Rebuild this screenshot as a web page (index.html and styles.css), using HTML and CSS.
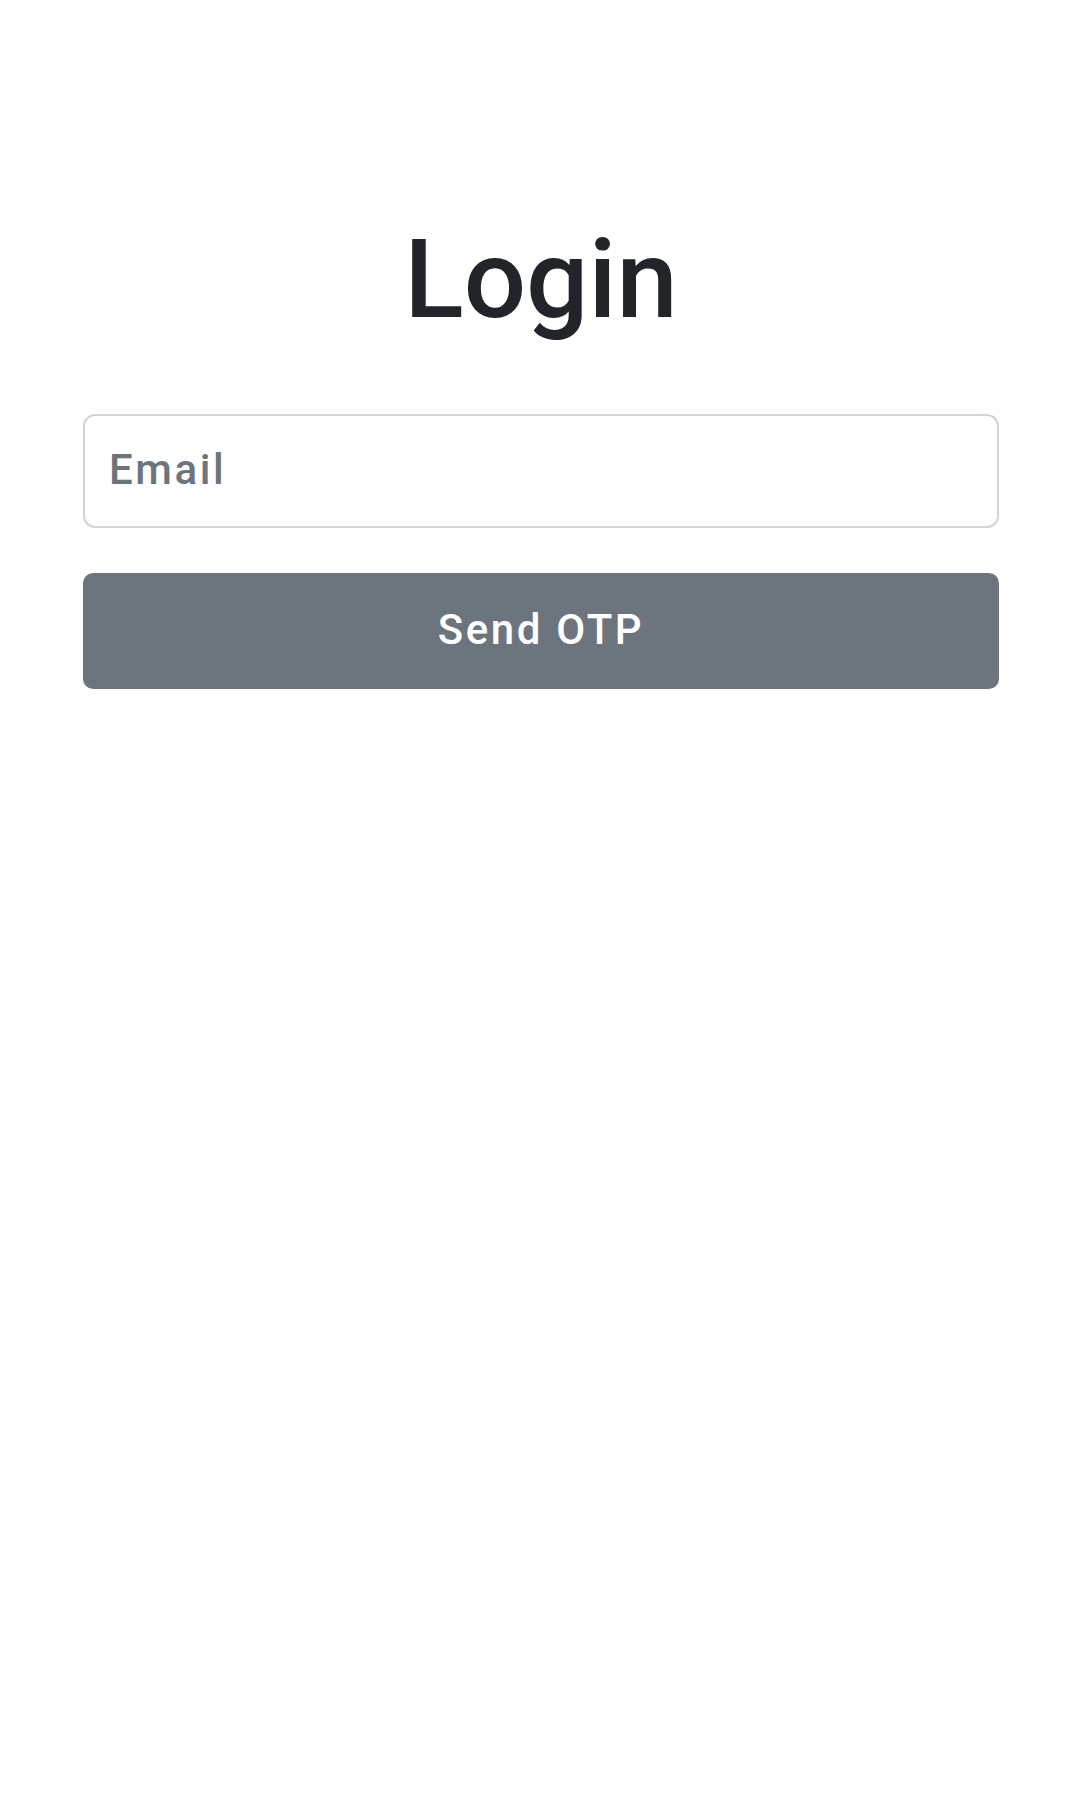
FILE: index.html
```html
<!DOCTYPE html>
<html lang="en">
<head>
<meta charset="utf-8">
<title>Login</title>
<link rel="stylesheet" href="styles.css">
</head>
<body>
<main class="login">
  <h1 class="login-title">Login</h1>
  <form class="login-form">
    <input class="login-input" type="email" placeholder="Email">
    <button class="login-button" type="button">Send OTP</button>
  </form>
</main>
</body>
</html>
```

FILE: styles.css
```css
html, body {
  margin: 0;
  padding: 0;
  background: #ffffff;
}
body {
  font-family: Roboto, "Liberation Sans", sans-serif;
  color: #212529;
}
.login {
  display: flex;
  flex-direction: column;
  padding: 214px 81px 0 83px;
}
.login-title {
  margin: 0;
  font-size: 110px;
  font-weight: 500;
  line-height: 1.2;
  text-align: center;
  color: #212529;
}
.login-form {
  display: flex;
  flex-direction: column;
  gap: 45px;
  margin-top: 68px;
}
.login-input {
  box-sizing: border-box;
  height: 114px;
  width: 100%;
  margin: 0;
  padding: 0 24px 3px 24px;
  border: 2px solid #ced4da;
  border-radius: 12px;
  font-family: Roboto, "Liberation Sans", sans-serif;
  font-size: 42px;
  font-weight: 500;
  letter-spacing: 2.6px;
  color: #212529;
  background: #fff;
  outline: none;
}
.login-input::placeholder {
  color: #6c757d;
  opacity: 1;
}
.login-button {
  box-sizing: border-box;
  height: 116px;
  width: 100%;
  margin: 0;
  padding: 0 0 4px 0;
  border: none;
  border-radius: 10px;
  background: #6c757d;
  color: #ffffff;
  font-family: Roboto, "Liberation Sans", sans-serif;
  font-size: 42px;
  font-weight: 500;
  letter-spacing: 2.6px;
  cursor: pointer;
}
```
